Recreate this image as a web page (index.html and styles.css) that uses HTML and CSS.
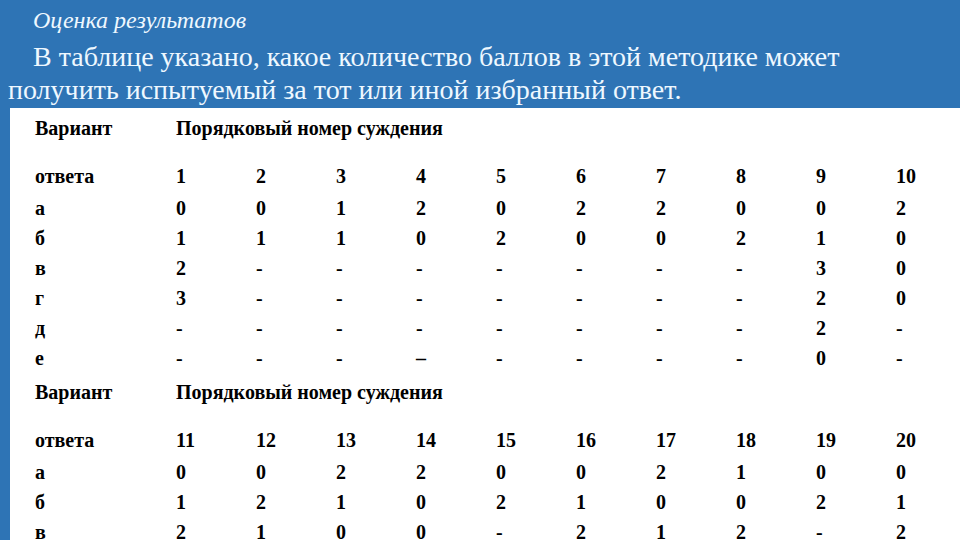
FILE: index.html
```html
<!DOCTYPE html>
<html lang="ru">
<head>
<meta charset="utf-8">
<link rel="stylesheet" href="styles.css">
</head>
<body>
<div class="slide">
  <div class="head">
    <p class="title">Оценка результатов</p>
    <p class="lead">В таблице указано, какое количество баллов в этой методике может получить испытуемый за тот или иной избранный ответ.</p>
  </div>
  <div class="panel">
    <div class="grid">
      <div class="row tall"><span>Вариант</span><span class="span">Порядковый номер суждения</span></div>
      <div class="row num"><span>ответа</span><span>1</span><span>2</span><span>3</span><span>4</span><span>5</span><span>6</span><span>7</span><span>8</span><span>9</span><span>10</span></div>
      <div class="row"><span>а</span><span>0</span><span>0</span><span>1</span><span>2</span><span>0</span><span>2</span><span>2</span><span>0</span><span>0</span><span>2</span></div>
      <div class="row"><span>б</span><span>1</span><span>1</span><span>1</span><span>0</span><span>2</span><span>0</span><span>0</span><span>2</span><span>1</span><span>0</span></div>
      <div class="row"><span>в</span><span>2</span><span>-</span><span>-</span><span>-</span><span>-</span><span>-</span><span>-</span><span>-</span><span>3</span><span>0</span></div>
      <div class="row"><span>г</span><span>3</span><span>-</span><span>-</span><span>-</span><span>-</span><span>-</span><span>-</span><span>-</span><span>2</span><span>0</span></div>
      <div class="row"><span>д</span><span>-</span><span>-</span><span>-</span><span>-</span><span>-</span><span>-</span><span>-</span><span>-</span><span>2</span><span>-</span></div>
      <div class="row last"><span>е</span><span>-</span><span>-</span><span>-</span><span>–</span><span>-</span><span>-</span><span>-</span><span>-</span><span>0</span><span>-</span></div>
      <div class="row tall"><span>Вариант</span><span class="span">Порядковый номер суждения</span></div>
      <div class="row num"><span>ответа</span><span>11</span><span>12</span><span>13</span><span>14</span><span>15</span><span>16</span><span>17</span><span>18</span><span>19</span><span>20</span></div>
      <div class="row"><span>а</span><span>0</span><span>0</span><span>2</span><span>2</span><span>0</span><span>0</span><span>2</span><span>1</span><span>0</span><span>0</span></div>
      <div class="row"><span>б</span><span>1</span><span>2</span><span>1</span><span>0</span><span>2</span><span>1</span><span>0</span><span>0</span><span>2</span><span>1</span></div>
      <div class="row"><span>в</span><span>2</span><span>1</span><span>0</span><span>0</span><span>-</span><span>2</span><span>1</span><span>2</span><span>-</span><span>2</span></div>
    </div>
  </div>
</div>
</body>
</html>
```
FILE: styles.css
```css
html {
  font-family: "Liberation Serif", serif;
}
body {
  margin: 0;
  background: #2e74b5;
  font-family: "Liberation Serif", serif;
}
.slide {
  display: flex;
  flex-direction: column;
  height: 540px;
  overflow: hidden;
}
.head {
  height: 108px;
  box-sizing: border-box;
  padding: 4px 20px 0 8px;
  color: #eef8ff;
}
.head p {
  margin: 0;
}
.title {
  font-style: italic;
  font-size: 24px;
  line-height: 33px;
  padding-left: 25px;
}
.head .lead {
  font-size: 28px;
  line-height: 33px;
  text-indent: 25px;
  margin-top: 3px;
}
.panel {
  flex: 1;
  margin-left: 10px;
  background: #ffffff;
  padding: 5px 0 0 25px;
  overflow: hidden;
}
.grid {
  display: flex;
  flex-direction: column;
}
.row {
  display: grid;
  grid-template-columns: 141px repeat(10, 80px);
  height: 30px;
  line-height: 30px;
  font-weight: bold;
  font-size: 20px;
  color: #000;
}
.row.tall {
  height: 48px;
}
.row.num {
  height: 32px;
}
.row.last {
  height: 34px;
}
.row .span {
  grid-column: 2 / span 10;
}
```
